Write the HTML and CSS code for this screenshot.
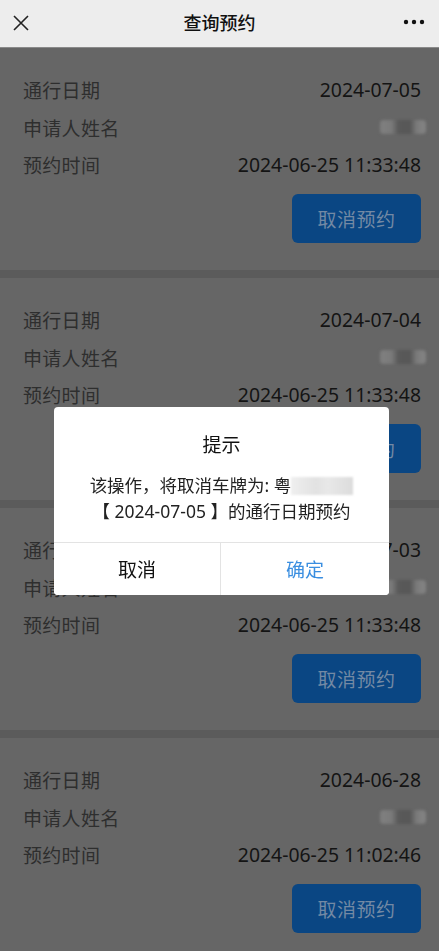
FILE: index.html
```html
<!DOCTYPE html>
<html lang="zh-CN">
<head>
<meta charset="utf-8">
<title>查询预约</title>
<link rel="stylesheet" href="styles.css">
</head>
<body>
<header class="navbar">
  <span class="nav-close">
    <svg width="16" height="16" viewBox="0 0 16 16"><path d="M1 1 L15 15 M15 1 L1 15" stroke="#222" stroke-width="1.6" fill="none"/></svg>
  </span>
  <h1 class="nav-title">查询预约</h1>
  <span class="nav-more">
    <svg width="22" height="6" viewBox="0 0 22 6"><circle cx="3" cy="3" r="2.2" fill="#111"/><circle cx="11" cy="3" r="2.2" fill="#111"/><circle cx="19" cy="3" r="2.2" fill="#111"/></svg>
  </span>
</header>

<main class="list">
  <section class="card">
    <div class="row"><span class="label">通行日期</span><span class="value">2024-07-05</span></div>
    <div class="row"><span class="label">申请人姓名</span><span class="value"><span class="blur"></span></span></div>
    <div class="row"><span class="label">预约时间</span><span class="value">2024-06-25 11:33:48</span></div>
    <div class="actions"><button class="btn">取消预约</button></div>
  </section>
  <section class="card">
    <div class="row"><span class="label">通行日期</span><span class="value">2024-07-04</span></div>
    <div class="row"><span class="label">申请人姓名</span><span class="value"><span class="blur"></span></span></div>
    <div class="row"><span class="label">预约时间</span><span class="value">2024-06-25 11:33:48</span></div>
    <div class="actions"><button class="btn">取消预约</button></div>
  </section>
  <section class="card">
    <div class="row"><span class="label">通行日期</span><span class="value">2024-07-03</span></div>
    <div class="row"><span class="label">申请人姓名</span><span class="value"><span class="blur"></span></span></div>
    <div class="row"><span class="label">预约时间</span><span class="value">2024-06-25 11:33:48</span></div>
    <div class="actions"><button class="btn">取消预约</button></div>
  </section>
  <section class="card">
    <div class="row"><span class="label">通行日期</span><span class="value">2024-06-28</span></div>
    <div class="row"><span class="label">申请人姓名</span><span class="value"><span class="blur"></span></span></div>
    <div class="row"><span class="label">预约时间</span><span class="value">2024-06-25 11:02:46</span></div>
    <div class="actions"><button class="btn">取消预约</button></div>
  </section>
</main>

<div class="mask">
  <div class="dialog">
    <div class="dialog-title">提示</div>
    <div class="dialog-body">
      <p class="msg">该操作，将取消车牌为: 粤<span class="plate"></span></p>
      <p class="msg">【 2024-07-05 】的通行日期预约</p>
    </div>
    <div class="dialog-footer">
      <button class="dlg-btn cancel">取消</button>
      <button class="dlg-btn confirm">确定</button>
    </div>
  </div>
</div>
</body>
</html>
```

FILE: styles.css
```css
* { box-sizing: border-box; }

html, body {
  margin: 0;
  padding: 0;
}

body {
  background: #5b5b5b;
  font-family: "Noto Sans", "Noto Sans CJK SC", sans-serif;
  color: #161616;
  overflow: hidden;
}

.navbar {
  height: 48px;
  background: #ededed;
  border-bottom: 1px solid #8a8a8a;
  display: grid;
  grid-template-columns: 60px 1fr 60px;
  align-items: center;
}

.nav-close {
  display: flex;
  padding-left: 13px;
  padding-bottom: 2px;
}

.nav-title {
  margin: 0;
  text-align: center;
  font-size: 18px;
  font-weight: 500;
  color: #111;
  font-family: "Noto Sans CJK SC", sans-serif;
  padding-bottom: 4px;
}

.nav-more {
  display: flex;
  justify-content: flex-end;
  padding-right: 14px;
  padding-bottom: 3px;
}

.list {
  display: flex;
  flex-direction: column;
  gap: 8px;
}

.card {
  height: 222px;
  background: #666666;
  padding: 23px 18px 0 23px;
}

.row {
  height: 37.5px;
  display: flex;
  justify-content: space-between;
  align-items: center;
}

.label {
  font-family: "Noto Sans CJK SC", sans-serif;
  font-size: 19px;
  color: #2e2e2e;
  letter-spacing: 0.3px;
}

.value {
  font-size: 19.4px;
  color: #141414;
  display: flex;
  align-items: center;
}

.blur {
  display: inline-block;
  width: 46px;
  height: 14px;
  margin-right: -5px;
  border-radius: 4px;
  background: linear-gradient(90deg, #808080 0%, #7a7a7a 25%, #595959 40%, #575757 65%, #7b7b7b 80%, #848484 100%);
  filter: blur(1.5px);
}

.actions {
  display: flex;
  justify-content: flex-end;
  margin-top: 10px;
}

.btn {
  width: 129px;
  height: 49px;
  border: none;
  border-radius: 6px;
  background: #0a4683;
  color: #7389a4;
  font-family: "Noto Sans CJK SC", sans-serif;
  font-size: 19px;
  letter-spacing: 0.5px;
  padding: 0;
}

.mask {
  position: fixed;
  inset: 0;
}

.dialog {
  position: absolute;
  top: 407px;
  left: 54px;
  width: 335px;
  background: #ffffff;
  border-radius: 4px;
  overflow: hidden;
  font-family: "Noto Sans CJK SC", sans-serif;
}

.dialog-title {
  text-align: center;
  font-size: 19px;
  color: #111;
  padding-top: 24px;
  line-height: 26px;
}

.dialog-body {
  padding: 15px 0 18px;
  text-align: center;
}

.msg {
  margin: 0;
  font-size: 17.5px;
  line-height: 26px;
  color: #222;
  font-family: "Noto Sans", "Noto Sans CJK SC", sans-serif;
}

.plate {
  display: inline-block;
  width: 62px;
  height: 18px;
  vertical-align: -3px;
  background: linear-gradient(90deg, #efefef 0%, #e2e2e2 40%, #e8e8e8 60%, #dcdcdc 100%);
  filter: blur(1px);
}

.dialog-footer {
  display: grid;
  grid-template-columns: 167px 1fr;
  border-top: 1px solid #e3e3e3;
  height: 53px;
}

.dlg-btn {
  border: none;
  background: #fff;
  font-family: "Noto Sans CJK SC", sans-serif;
  font-size: 19px;
  padding: 0 0 2px;
}

.cancel {
  color: #111;
  border-right: 1px solid #e3e3e3;
}

.confirm {
  color: #3a8ee0;
}
```
